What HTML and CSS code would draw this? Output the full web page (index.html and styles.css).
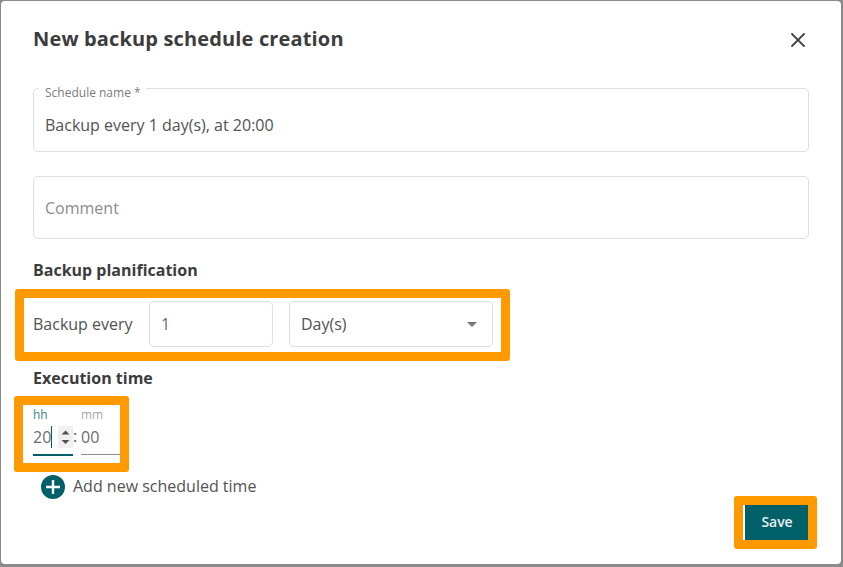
FILE: index.html
```html
<!DOCTYPE html>
<html lang="en">
<head>
<meta charset="utf-8">
<title>New backup schedule creation</title>
<link rel="stylesheet" href="styles.css">
</head>
<body>
<main class="dialog">
  <header class="dialog-header">
    <h1 class="title">New backup schedule creation</h1>
    <svg class="close" width="16" height="16" viewBox="0 0 16 16"><path d="M1.4 1.4 14.6 14.6M14.6 1.4 1.4 14.6" stroke="#3c3c3c" stroke-width="1.9" fill="none"/></svg>
  </header>
  <div class="field field-name">
    <span class="field-label">Schedule name *</span>
    <span>Backup every 1 day(s), at 20:00</span>
  </div>
  <div class="field field-comment"><span>Comment</span></div>
  <h2 class="section-title">Backup planification</h2>
  <div class="plan highlighted">
    <span class="plan-label">Backup every</span>
    <div class="box box-count">1</div>
    <div class="box box-unit"><span>Day(s)</span>
      <svg width="10" height="5" viewBox="0 0 10 5"><path d="M0 0H10L5 5Z" fill="#757575"/></svg>
    </div>
  </div>
  <h2 class="section-title">Execution time</h2>
  <div class="time highlighted">
    <div class="unit unit-active">
      <span class="unit-label">hh</span>
      <div class="unit-value"><span>20</span><i class="caret"></i>
        <span class="spinner"><svg width="15" height="22" viewBox="0 0 15 22"><path d="M3.5 8.5 7.5 4.5 11.5 8.5ZM3.5 14 7.5 18 11.5 14Z" fill="#505050"/></svg></span>
      </div>
    </div>
    <span class="colon">:</span>
    <div class="unit">
      <span class="unit-label">mm</span>
      <div class="unit-value"><span>00</span></div>
    </div>
  </div>
  <div class="add">
    <svg width="24" height="24" viewBox="0 0 24 24"><circle cx="12" cy="12" r="12" fill="#006068"/><path d="M12 5V19M5 12H19" stroke="#fff" stroke-width="2.4"/></svg>
    <span class="add-label">Add new scheduled time</span>
  </div>
  <footer class="actions"><div class="save highlighted"><button class="save-button" type="button">Save</button></div></footer>
</main>
</body>
</html>
```
FILE: styles.css
```css
* { box-sizing: border-box; }
body {
  margin: 0;
  height: 567px;
  padding: 1px 2px 3px 1px;
  overflow: hidden;
  background: #8b8b8b;
  color: #525252;
  font: 400 16px/22px "Open Sans", "Noto Sans", sans-serif;
}
.dialog {
  height: 563px;
  padding: 0 32px;
  background: #fff;
  border-radius: 4px;
  display: flex;
  flex-direction: column;
}
.dialog-header {
  height: 87px;
  padding-top: 24px;
  display: flex;
  justify-content: space-between;
}
.title {
  margin: 0;
  font-size: 20px;
  line-height: 28px;
  font-weight: 700;
  letter-spacing: 0.15px;
  color: #3c3c3c;
}
.close { margin: 7px 3px 0 0; }
.field {
  position: relative;
  flex: none;
  border: 1px solid #dedede;
  border-radius: 5px;
  padding-left: 11px;
}
.field-name { height: 64px; padding-top: 25px; }
.field-comment { height: 63px; margin-top: 24px; padding-top: 20px; color: #8c8c8c; }
.field-label {
  position: absolute;
  left: 5px;
  top: -4px;
  padding: 0 5px 0 6px;
  background: #fff;
  color: #7c7c7c;
  font-size: 12px;
  line-height: 16px;
  white-space: nowrap;
}
.section-title { margin: 20px 0 0; font-size: 16px; line-height: 22px; font-weight: 700; color: #3c3c3c; }
.plan {
  height: 46px;
  margin-top: 20px;
  display: flex;
  align-items: center;
  align-self: flex-start;
}
.highlighted { position: relative; }
.highlighted::after {
  content: "";
  position: absolute;
  box-sizing: border-box;
  border: 9px solid #ff9900;
  border-radius: 3px;
  pointer-events: none;
}
.plan::after { left: -18px; top: -12px; width: 495px; height: 72px; }
.plan-label { width: 116px; white-space: nowrap; }
.box {
  height: 46px;
  padding: 0 15px 0 11px;
  border: 1px solid #dedede;
  border-radius: 5px;
  display: flex;
  align-items: center;
  justify-content: space-between;
}
.box-count { width: 124px; margin-right: 16px; color: #6c6c6c; }
.box-unit { width: 204px; }
.time { display: flex; height: 51px; margin-top: 16px; width: 87px; }
.time::after { left: -19px; top: -9px; width: 115px; height: 76px; }
.unit {
  width: 39px;
  height: 50px;
  border-bottom: 1px solid #8d8d8d;
  color: #6c6c6c;
}
.unit-active { width: 40px; height: 51px; border-bottom: 2px solid #006068; }
.unit-label { display: block; height: 18px; font-size: 12px; line-height: 20px; color: #a8a8a8; }
.unit-active .unit-label { color: #3c858c; }
.unit-value { display: flex; height: 27px; align-items: center; }
.caret { width: 1px; height: 22px; background: #006068; }
.spinner { width: 15px; height: 22px; background: #f0f0f0; margin-left: auto; }
.spinner svg { display: block; }
.colon { width: 8px; padding-top: 20px; }
.add { display: flex; align-items: center; height: 24px; margin: 19px 0 0 8px; gap: 8px; }
.add-label { padding-bottom: 2px; }
.actions { display: flex; justify-content: flex-end; margin-top: 6px; }
.save { width: 64px; height: 35px; }
.save::after { left: -11px; top: -9px; width: 83px; height: 53px; }
.save-button {
  display: block;
  width: 64px;
  height: 35px;
  padding: 0 0 2px;
  border: 0;
  background: #006068;
  color: #e8f0f0;
  font: 600 14px/33px "Open Sans", sans-serif;
  letter-spacing: -0.1px;
}
```
